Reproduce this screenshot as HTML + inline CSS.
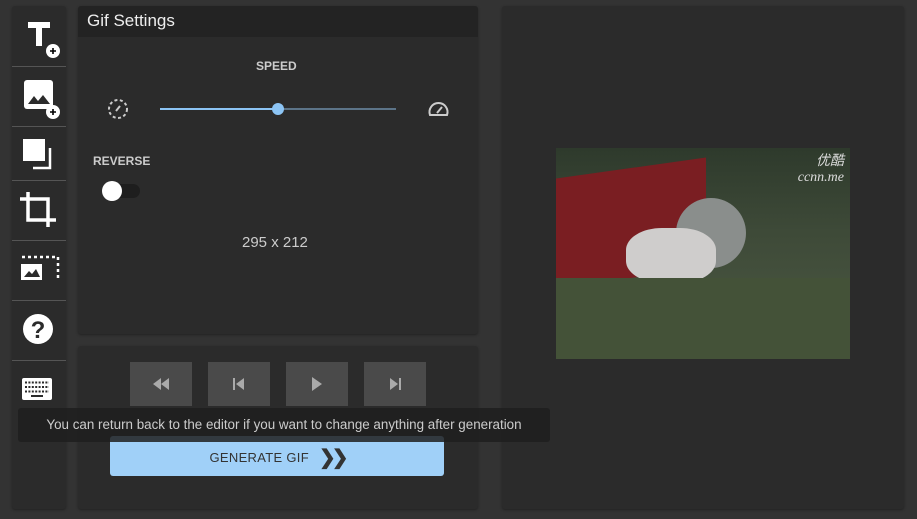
<!DOCTYPE html>
<html><head><style>
*{margin:0;padding:0;box-sizing:border-box}
body{width:917px;height:519px;background:#333;font-family:"Liberation Sans",sans-serif;position:relative;overflow:hidden;color:#ddd}
.p{position:absolute;background:#2b2b2b;border-radius:3px;box-shadow:0 1px 2px #222}
.sep{position:absolute;left:12px;width:54px;height:1px;background:#555}
.b{position:absolute;top:362px;width:62px;height:44px;background:#4a4a4a;display:flex;align-items:center;justify-content:center}
</style></head><body>
<div class="p" style="left:12px;top:6px;width:54px;height:503px"></div>
<div class="sep" style="top:66px"></div><div class="sep" style="top:126px"></div><div class="sep" style="top:180px"></div><div class="sep" style="top:240px"></div><div class="sep" style="top:300px"></div><div class="sep" style="top:360px"></div>
<svg style="position:absolute;left:0;top:0" width="70" height="420" fill="#fff">
<path d="M28 22h22v6h-8v18h-6V28h-8z"/><circle cx="53" cy="51" r="7" fill="#fff"/><path d="M50 51h6M53 48v6" stroke="#000" stroke-width="1.6"/>
<rect x="24" y="80" width="29" height="29" rx="3"/><path d="M28 104l6-8 4 5 5-6 7 9z" fill="#2b2b2b"/><circle cx="53" cy="112" r="7"/><path d="M50 112h6M53 109v6" stroke="#000" stroke-width="1.6"/>
<rect x="23" y="139" width="22" height="22"/><path d="M50 148v20H33" stroke="#fff" stroke-width="2.5" fill="none"/>
<path d="M28 192v28h28M20 199h28v28" stroke="#fff" stroke-width="3.5" fill="none"/>
<rect x="21" y="264" width="21" height="16"/><path d="M24 277l5-6 3 3 4-5 4 8z" fill="#2b2b2b"/><path d="M22 257h36v24" stroke="#fff" stroke-width="2.5" stroke-dasharray="3 3" fill="none"/>
<circle cx="38" cy="329" r="15"/><text x="38" y="338" font-size="24" font-weight="bold" text-anchor="middle" fill="#2b2b2b" font-family="Liberation Sans">?</text>
<rect x="22" y="378" width="30" height="22" rx="2"/><g stroke="#2b2b2b" stroke-width="2" stroke-dasharray="2 1.4"><path d="M25 382.5h24M25 387h24M25 391.5h24"/></g><rect x="31" y="395" width="12" height="2" fill="#2b2b2b"/>
</svg>
<div class="p" style="left:78px;top:6px;width:400px;height:328px;overflow:hidden">
<div style="height:31px;background:#232323;font-size:17px;color:#eee;padding:5px 9px">Gif Settings</div>
</div>
<div style="position:absolute;left:256px;top:59px;font-size:12px;font-weight:bold;color:#ccc">SPEED</div>
<svg style="position:absolute;left:100px;top:90px" width="360" height="36">
<circle cx="18" cy="19" r="9" stroke="#ccc" stroke-width="2" fill="none" stroke-dasharray="3 2.5"/><path d="M16 21l4-5" stroke="#ccc" stroke-width="2"/>
<rect x="60" y="18" width="118" height="2" fill="#8cc4f4"/><rect x="178" y="18" width="118" height="2" fill="#5c7488"/><circle cx="178" cy="19" r="6" fill="#8cc4f4"/>
<path d="M330 25a9 9 0 1 1 17 0z" stroke="#ccc" stroke-width="2" fill="none"/><path d="M337 23l5-6" stroke="#ccc" stroke-width="2"/>
</svg>
<div style="position:absolute;left:93px;top:154px;font-size:12px;font-weight:bold;color:#ccc">REVERSE</div>
<div style="position:absolute;left:102px;top:184px;width:38px;height:14px;border-radius:7px;background:#1e1e1e"></div>
<div style="position:absolute;left:102px;top:181px;width:20px;height:20px;border-radius:50%;background:#fff"></div>
<div style="position:absolute;left:242px;top:234px;font-size:15px;color:#ccc">295 x 212</div>
<div class="p" style="left:78px;top:346px;width:400px;height:163px"></div>
<div class="b" style="left:130px"><svg width="20" height="12" fill="#aaa"><path d="M10 0v12L2 6zM18 0v12l-8-6z"/></svg></div>
<div class="b" style="left:208px"><svg width="14" height="12" fill="#aaa"><rect x="1" width="2" height="12"/><path d="M12 0v12L4 6z"/></svg></div>
<div class="b" style="left:286px"><svg width="12" height="14" fill="#aaa"><path d="M1 0v14l10-7z"/></svg></div>
<div class="b" style="left:364px"><svg width="14" height="12" fill="#aaa"><path d="M2 0v12l8-6z"/><rect x="11" width="2" height="12"/></svg></div>
<div style="position:absolute;left:110px;top:436px;width:334px;height:40px;background:#a0d0f8;border-radius:3px;font-size:13px;color:#333;display:flex;align-items:center;justify-content:center;padding-top:2px;letter-spacing:.3px">GENERATE GIF <b style="font-size:20px;margin-left:10px;letter-spacing:-4px">❯❯</b></div>
<div class="p" style="left:502px;top:6px;width:402px;height:503px"></div>
<div style="position:absolute;left:18px;top:408px;width:532px;height:34px;background:rgba(30,30,30,.85);border-radius:3px;font-size:13.4px;color:#ccc;text-align:center;line-height:34px;white-space:nowrap">You can return back to the editor if you want to change anything after generation</div>
<div style="position:absolute;left:556px;top:148px;width:294px;height:211px;background:linear-gradient(180deg,#2e3a2c 0%,#3e4a38 40%,#4d5a44 100%);overflow:hidden">
<div style="position:absolute;left:0;top:20px;width:150px;height:110px;background:#7a1e22;transform:skewY(-8deg)"></div>
<div style="position:absolute;left:120px;top:50px;width:70px;height:70px;border-radius:50%;background:#8a8e8c"></div>
<div style="position:absolute;left:70px;top:80px;width:90px;height:55px;border-radius:40%;background:#cfcdcc"></div>
<div style="position:absolute;left:0;top:130px;width:294px;height:81px;background:#445238"></div>
<div style="position:absolute;right:6px;top:2px;color:#ddd;font-size:14px;font-style:italic;text-align:right;font-family:'Liberation Serif','Noto Sans CJK SC',serif">优酷<br>ccnn.me</div>
</div>
</body></html>
